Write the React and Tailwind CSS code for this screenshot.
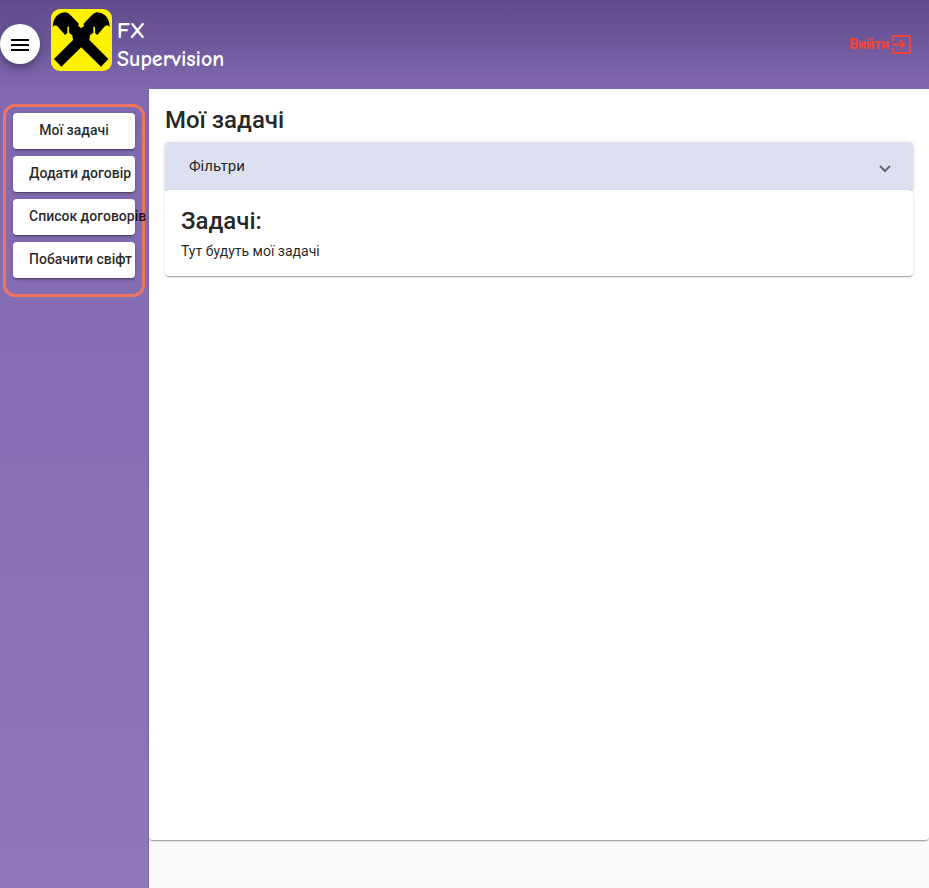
import React from "react";

const navItems = ["Додати договір", "Список договорів", "Побачити свіфт"];

const navButton =
  "flex h-9 w-full items-center rounded bg-white px-4 pb-0.5 text-sm font-medium leading-5 whitespace-nowrap text-black/85 shadow-[0_3px_1px_-2px_rgba(0,0,0,0.2),0_2px_2px_0_rgba(0,0,0,0.14),0_1px_5px_0_rgba(0,0,0,0.12)]";

function Logo() {
  return (
    <svg viewBox="153 27 183 186" className="h-[62px] w-[61px] shrink-0" role="img" aria-label="FX Supervision">
      <rect x="153" y="27" width="183" height="186" rx="27" fill="#fff200" />
      <path
        fill="#000"
        d="M158 82 Q158 57 173 45 Q184 36 197 37 Q205 39 212 46 L237 72 L234 78 L239 80 L243.5 85 L248 80 L253 78 L250 72 L275 46 Q282 39 290 37 Q303 36 314 45 Q329 57 329 82 L324 76 L316 77 L292 105 L285 99 L285 82 L280 79 L280 98 L270 106 L268 120 L325 177 L303 200 L243.5 142 L184 200 L162 177 L219 120 L217 106 L207 98 L207 79 L202 82 L202 99 L195 105 L171 77 L163 76 Z"
      />
    </svg>
  );
}

function Header() {
  return (
    <header className="flex h-[89px] items-start justify-between bg-linear-to-b from-[#5f4a8b] to-[#8069b0] pr-[18px]">
      <div className="flex items-start">
        <button
          type="button"
          aria-label="Меню"
          className="mt-6 flex size-10 items-center justify-center rounded-full bg-white shadow-[0_3px_5px_-1px_rgba(0,0,0,0.2),0_6px_10px_0_rgba(0,0,0,0.14),0_1px_18px_0_rgba(0,0,0,0.12)]"
        >
          <svg viewBox="0 0 24 24" className="mt-0.5 size-6" fill="#000">
            <path d="M3 18h18v-2H3v2zm0-5h18v-2H3v2zm0-7v2h18V6H3z" />
          </svg>
        </button>
        <div className="mt-[9px] ml-[11px] flex gap-[5px]">
          <Logo />
          <p className="mt-2 w-28 font-['Comic_Sans_MS','Comic_Neue','Open_Sans',sans-serif] text-[22px] leading-7 font-bold text-white">
            FX Supervision
          </p>
        </div>
      </div>
      <button type="button" className="mt-[34px] flex items-center gap-0.5 text-sm leading-5 font-bold text-[#f44336]">
        Вийти
        <svg viewBox="0 0 20 20" className="size-5" fill="none" stroke="currentColor" strokeWidth="2">
          <path d="M2 7V3q0-1 1-1h15q1 0 1 1v15q0 1-1 1H3q-1 0-1-1v-4M1 10.500h12M9 6l4.500 4.500L9 15" />
        </svg>
      </button>
    </header>
  );
}

export default function App() {
  return (
    <div className="flex min-h-screen flex-col bg-[#fafafa] font-[Roboto,sans-serif] text-black/87">
      <Header />
      <div className="flex flex-1">
        <aside className="relative w-[149px] shrink-0 border-r border-[#7a65a5] bg-linear-to-b from-[#8069b0] to-[#8f78b9] pt-[15px] pl-[3px]">
          <nav className="flex w-[142px] flex-col gap-[7px] rounded-xl border-3 border-[#f07560] px-[7px] pt-1.5 pb-4">
            <button type="button" className={navButton + " justify-center"}>
              Мої задачі
            </button>
            {navItems.map((label) => (
              <button key={label} type="button" className={navButton}>
                {label}
              </button>
            ))}
          </nav>
        </aside>
        <main className="mb-12 min-w-0 flex-1 rounded-b bg-white px-4 pt-[15px] shadow-[0_2px_1px_-1px_rgba(0,0,0,0.2),0_1px_1px_0_rgba(0,0,0,0.14),0_1px_3px_0_rgba(0,0,0,0.12)]">
          <h1 className="mb-[6px] text-2xl leading-8 font-medium">Мої задачі</h1>
          <button
            type="button"
            aria-expanded="false"
            className="flex h-12 w-full items-center justify-between rounded bg-[#dde0f1] px-6 text-[15px] leading-6 shadow-[0_3px_1px_-2px_rgba(0,0,0,0.2),0_2px_2px_0_rgba(0,0,0,0.14),0_1px_5px_0_rgba(0,0,0,0.12)]"
          >
            Фільтри
            <svg viewBox="0 0 12 8" className="mt-1.5 mr-[-2px] h-2 w-3" fill="none" stroke="#66676f" strokeWidth="2">
              <path d="M1 1l5 5 5-5" />
            </svg>
          </button>
          <section className="relative rounded bg-white px-4 py-[15px] shadow-[0_2px_1px_-1px_rgba(0,0,0,0.2),0_1px_1px_0_rgba(0,0,0,0.14),0_1px_3px_0_rgba(0,0,0,0.12)]">
            <h2 className="text-2xl leading-8 font-medium">Задачі:</h2>
            <p className="mt-1 text-sm leading-5">Тут будуть мої задачі</p>
          </section>
        </main>
      </div>
    </div>
  );
}
